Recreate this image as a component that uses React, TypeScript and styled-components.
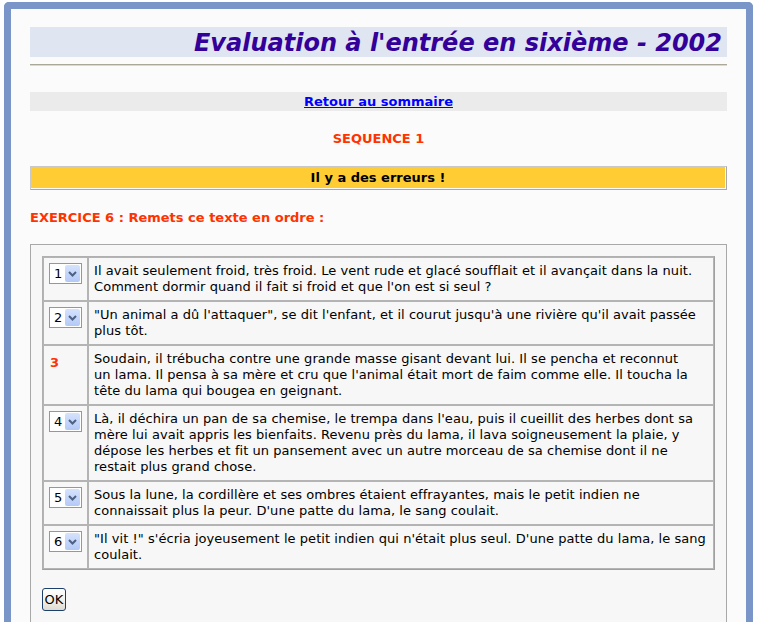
import React from 'react';
import styled, {createGlobalStyle} from 'styled-components';

const GlobalStyle = createGlobalStyle`
	html, body {
		margin: 0;
		padding: 0;
		background: #ffffff;
		overflow: hidden;
	}
`;

const Frame = styled.div`
	box-sizing: border-box;
	width: 749px;
	height: 640px;
	margin: 2px 0 0 4px;
	padding: 18px 19px 0 19px;
	border: 7px solid #7a96c8;
	border-bottom: none;
	border-radius: 5px 5px 0 0;
	background: #fbfbfb;
	font-family: 'DejaVu Sans', Verdana, sans-serif;
	font-size: 13px;
	color: #000;
`;

const TitleBar = styled.h1`
	margin: 0;
	height: 30px;
	padding-right: 5px;
	background: #dfe6f1;
	color: #330099;
	font-family: 'DejaVu Sans', sans-serif;
	font-size: 24px;
	font-weight: bold;
	font-style: italic;
	line-height: 32px;
	text-align: right;
	white-space: nowrap;
`;

const Rule = styled.hr`
	margin: 7px 0 0 0;
	height: 0;
	border: none;
	border-top: 1px solid #aca899;
	border-bottom: 1px solid #dcdad0;
`;

const BackBar = styled.div`
	margin-top: 26px;
	height: 19px;
	background: #ebebeb;
	text-align: center;
	line-height: 20px;
`;

const BackLink = styled.a`
	color: #0000ff;
	font-weight: bold;
	font-size: 13px;
	text-decoration: underline;
`;

const Heading = styled.div<{$center?: boolean; $top: number}>`
	margin-top: ${p => p.$top}px;
	color: #ff3300;
	font-weight: bold;
	font-size: 13px;
	line-height: 16px;
	text-align: ${p => (p.$center ? 'center' : 'left')};
`;

const Banner = styled.div`
	margin-top: 19px;
	padding: 0 1px 1px 0;
	border: 1px solid #a8a8a8;
	border-top-color: #c8c8c8;
	border-left-color: #c8c8c8;
`;

const BannerCell = styled.div`
	height: 21px;
	background: #ffcc33;
	text-align: center;
	font-weight: bold;
	line-height: 22px;
`;

const Box = styled.div`
	margin-top: 18px;
	padding: 11px 11px 40px 11px;
	border: 1px solid #a8a8a8;
	background: #f7f7f7;
`;

const Table = styled.table`
	width: 100%;
	border-collapse: separate;
	border-spacing: 0;
	border: 1px solid #b0b0b0;
	border-right-color: #a0a0a0;
	border-bottom-color: #a0a0a0;
	font-size: 13px;
`;

const Cell = styled.td<{$narrow?: boolean}>`
	vertical-align: top;
	border: 1px solid #b4b4b4;
	padding: ${p => (p.$narrow ? '5px 5px 0 5px' : '5px')};
	width: ${p => (p.$narrow ? '33px' : 'auto')};
	line-height: 16px;
	white-space: nowrap;
	letter-spacing: ${p => (p.$narrow ? '0' : '0.05px')};
`;

const Fixed = styled.span`
	display: inline-block;
	margin: 4px 0 0 1px;
	color: #ff3300;
	font-weight: bold;
`;

const Picker = styled.div`
	box-sizing: border-box;
	display: flex;
	align-items: center;
	justify-content: space-between;
	width: 33px;
	height: 21px;
	border: 1px solid #7f9db9;
	background: #ffffff;
	padding: 1px;
	font-size: 13px;
`;

const PickerValue = styled.span`
	padding-left: 3px;
	line-height: 17px;
`;

const PickerButton = styled.span`
	display: flex;
	align-items: center;
	justify-content: center;
	width: 15px;
	height: 17px;
	border-radius: 2px;
	background: linear-gradient(#d6e3fd, #b3c9f6);
`;

const OkButton = styled.button`
	display: block;
	margin-top: 18px;
	width: 24px;
	height: 23px;
	padding: 0;
	border: 1px solid #1c3f6c;
	border-radius: 3px;
	background: linear-gradient(#ffffff, #f0efe8 60%, #dedbcf);
	font-family: 'DejaVu Sans', sans-serif;
	font-size: 13px;
	color: #000;
`;

const rows: {n: number; fixed?: boolean; lines: string[]}[] = [
	{n: 1, lines: [
		"Il avait seulement froid, très froid. Le vent rude et glacé soufflait et il avançait dans la nuit.",
		"Comment dormir quand il fait si froid et que l'on est si seul ?",
	]},
	{n: 2, lines: [
		"\"Un animal a dû l'attaquer\", se dit l'enfant, et il courut jusqu'à une rivière qu'il avait passée",
		"plus tôt.",
	]},
	{n: 3, fixed: true, lines: [
		"Soudain, il trébucha contre une grande masse gisant devant lui. Il se pencha et reconnut",
		"un lama. Il pensa à sa mère et cru que l'animal était mort de faim comme elle. Il toucha la",
		"tête du lama qui bougea en geignant.",
	]},
	{n: 4, lines: [
		"Là, il déchira un pan de sa chemise, le trempa dans l'eau, puis il cueillit des herbes dont sa",
		"mère lui avait appris les bienfaits. Revenu près du lama, il lava soigneusement la plaie, y",
		"dépose les herbes et fit un pansement avec un autre morceau de sa chemise dont il ne",
		"restait plus grand chose.",
	]},
	{n: 5, lines: [
		"Sous la lune, la cordillère et ses ombres étaient effrayantes, mais le petit indien ne",
		"connaissait plus la peur. D'une patte du lama, le sang coulait.",
	]},
	{n: 6, lines: [
		"\"Il vit !\" s'écria joyeusement le petit indien qui n'était plus seul. D'une patte du lama, le sang",
		"coulait.",
	]},
];

const Chevron = () => (
	<svg width="9" height="6" viewBox="0 0 9 6">
		<path d="M1 1 L4.5 4.5 L8 1" fill="none" stroke="#4d6185" strokeWidth="2"/>
	</svg>
);

const App = (): JSX.Element => (
	<>
		<GlobalStyle/>
		<Frame>
			<TitleBar>Evaluation à l'entrée en sixième - 2002</TitleBar>
			<Rule/>
			<BackBar>
				<BackLink href="#">Retour au sommaire</BackLink>
			</BackBar>
			<Heading $center $top={20}>SEQUENCE 1</Heading>
			<Banner>
				<BannerCell>Il y a des erreurs !</BannerCell>
			</Banner>
			<Heading $top={20}>EXERCICE 6 : Remets ce texte en ordre :</Heading>
			<Box>
				<Table>
					<tbody>
						{rows.map(row => (
							<tr key={row.n}>
								<Cell $narrow>
									{row.fixed ? (
										<Fixed>{row.n}</Fixed>
									) : (
										<Picker>
											<PickerValue>{row.n}</PickerValue>
											<PickerButton><Chevron/></PickerButton>
										</Picker>
									)}
								</Cell>
								<Cell>
									{row.lines.map((line, i) => (
										<React.Fragment key={i}>
											{i > 0 && <br/>}
											{line}
										</React.Fragment>
									))}
								</Cell>
							</tr>
						))}
					</tbody>
				</Table>
				<OkButton>OK</OkButton>
			</Box>
		</Frame>
	</>
);

export default App;
